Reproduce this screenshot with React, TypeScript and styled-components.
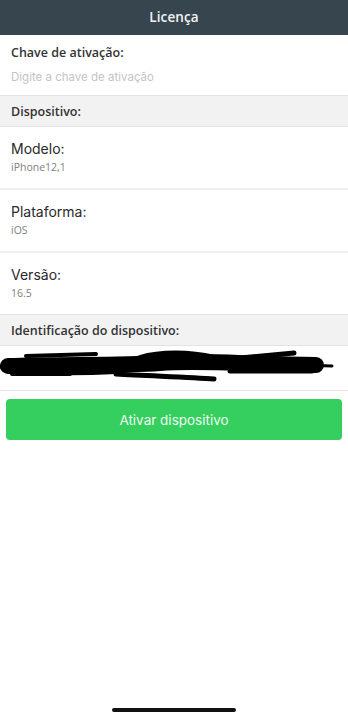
import React from "react";
import styled, { createGlobalStyle } from "styled-components";

const Global = createGlobalStyle`
  html, body { margin: 0; padding: 0; background: #fff; }
  body { font-family: "Open Sans", "Noto Sans", sans-serif; -webkit-font-smoothing: antialiased; }
  * { box-sizing: border-box; }
`;

const Page = styled.div`
  display: flex;
  flex-direction: column;
  min-height: 100vh;
  width: 348px;
  background: #fff;
`;

const Header = styled.header`
  height: 35px;
  background: #37464e;
  display: flex;
  align-items: center;
  justify-content: center;
  padding-bottom: 2px;
  color: #f1f3f4;
  font-family: "Open Sans", sans-serif;
  font-weight: 600;
  font-size: 13.5px;
  letter-spacing: 0.1px;
`;

const KeyBlock = styled.div`
  height: 60px;
  padding: 9px 11px 0;
  display: flex;
  flex-direction: column;
  gap: 7px;
`;

const KeyLabel = styled.div`
  font-family: "Open Sans", sans-serif;
  font-weight: 600;
  font-size: 12.5px;
  color: #333;
  line-height: 18px;
`;

const Placeholder = styled.div`
  font-family: Inter, "Liberation Sans", sans-serif;
  font-size: 11.5px;
  color: #c4c4c6;
  line-height: 16px;
`;

const SectionHeader = styled.div`
  height: 32px;
  background: #f2f2f2;
  border-top: 1px solid #e3e3e3;
  border-bottom: 1px solid #e3e3e3;
  display: flex;
  align-items: center;
  padding: 0 11px;
  font-family: "Open Sans", sans-serif;
  font-weight: 600;
  font-size: 12.5px;
  color: #333;
`;

const InfoRow = styled.div<{ $last?: boolean }>`
  height: ${(p) => (p.$last ? 61 : 63)}px;
  padding: 12px 11px 0;
  border-bottom: ${(p) => (p.$last ? "none" : "2px solid #efefef")};
  display: flex;
  flex-direction: column;
  gap: 1px;
`;

const InfoLabel = styled.div`
  font-family: Inter, "Liberation Sans", sans-serif;
  font-size: 14px;
  color: #2a2a2a;
  line-height: 20px;
`;

const InfoValue = styled.div`
  font-family: "Open Sans", sans-serif;
  font-weight: 500;
  font-size: 10.5px;
  color: #808080;
  line-height: 14px;
`;

const IdRow = styled.div`
  height: 45px;
  border-bottom: 1px solid #e6e6e6;
  display: flex;
  align-items: flex-start;
  padding-top: 3px;
`;

const Button = styled.button`
  margin: 8px 6px 0;
  height: 41px;
  border: none;
  border-radius: 4px;
  background: #34cf5f;
  color: #eefbf1;
  font-family: Inter, "Liberation Sans", sans-serif;
  font-size: 13.5px;
  display: flex;
  align-items: center;
  justify-content: center;
`;

const HomeBar = styled.div`
  margin: auto auto 8px;
  width: 124px;
  height: 4px;
  border-radius: 3px;
  background: #111;
`;

function Scribble() {
  return (
    <svg width="348" height="34" viewBox="0 0 348 34" style={{ display: "block" }}>
      <g fill="none" stroke="#000" strokeLinecap="round" strokeLinejoin="round">
        <path d="M8 17 C60 15 120 17 160 14 C200 11 240 15 316 16" strokeWidth="16" />
        <path d="M5 18 C40 22 80 22 116 20" strokeWidth="10" />
        <path d="M26 7 L96 5" strokeWidth="4" />
        <path d="M140 9 C160 3 190 3 214 9" strokeWidth="6" />
        <path d="M230 10 L294 4" strokeWidth="5" />
        <path d="M116 25 C150 27 190 28 214 30" strokeWidth="5" />
        <path d="M12 25 L70 25" strokeWidth="4" />
        <path d="M300 16 L332 17" strokeWidth="3" />
        <path d="M230 22 L312 22" strokeWidth="5" />
      </g>
    </svg>
  );
}

export default function App() {
  return (
    <>
      <Global />
      <Page>
        <Header>Licença</Header>
        <KeyBlock>
          <KeyLabel>Chave de ativação:</KeyLabel>
          <Placeholder>Digite a chave de ativação</Placeholder>
        </KeyBlock>
        <SectionHeader>Dispositivo:</SectionHeader>
        <InfoRow>
          <InfoLabel>Modelo:</InfoLabel>
          <InfoValue>iPhone12,1</InfoValue>
        </InfoRow>
        <InfoRow>
          <InfoLabel>Plataforma:</InfoLabel>
          <InfoValue>iOS</InfoValue>
        </InfoRow>
        <InfoRow $last>
          <InfoLabel>Versão:</InfoLabel>
          <InfoValue>16.5</InfoValue>
        </InfoRow>
        <SectionHeader>Identificação do dispositivo:</SectionHeader>
        <IdRow>
          <Scribble />
        </IdRow>
        <Button>Ativar dispositivo</Button>
        <HomeBar />
      </Page>
    </>
  );
}
